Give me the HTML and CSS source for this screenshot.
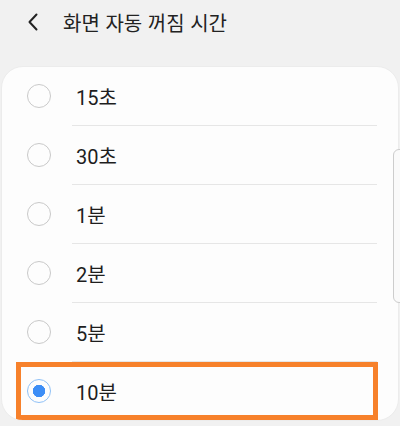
FILE: index.html
```html
<!DOCTYPE html>
<html lang="ko">
<head>
  <meta charset="UTF-8" />
  <meta name="viewport" content="width=device-width, initial-scale=1.0"/>
  <title>화면 자동 꺼짐 시간</title>
  <link rel="stylesheet" href="styles.css">
</head>
<body>
  <div class="screen">
    <header class="topbar">
      <button class="back" aria-label="뒤로">
        <svg width="12" height="18" viewBox="0 0 12 18">
          <path d="M9.5 1.5 L2.5 9 L9.5 16.5" fill="none" stroke="#222" stroke-width="2" stroke-linecap="round" stroke-linejoin="round"/>
        </svg>
      </button>
      <h1 class="title">화면 자동 꺼짐 시간</h1>
    </header>

    <!-- timeout options -->
    <ul class="options">
      <li class="option"><span class="radio"></span><span class="label">15초</span></li>
      <li class="option"><span class="radio"></span><span class="label">30초</span></li>
      <li class="option"><span class="radio"></span><span class="label">1분</span></li>
      <li class="option"><span class="radio"></span><span class="label">2분</span></li>
      <li class="option"><span class="radio"></span><span class="label">5분</span></li>
      <li class="option selected"><span class="radio"></span><span class="label">10분</span></li>
    </ul>

    <div class="edge-handle"></div>
  </div>
</body>
</html>
```

FILE: styles.css
```css
body {
  margin: 0;
  background: #f1f1f1;
  font-family: 'Roboto', 'Noto Sans CJK KR', sans-serif;
  color: #1e1e1e;
}

.screen {
  position: relative;
  width: 400px;
  height: 426px;
  overflow: hidden;
}

.topbar {
  display: flex;
  align-items: center;
  height: 44px;
  padding-left: 27px;
}

.back {
  display: flex;
  align-items: center;
  padding: 0;
  border: none;
  background: none;
  width: 36px;
  height: 20px;
}

.title {
  margin: 0;
  font-family: 'Noto Sans CJK KR', sans-serif;
  font-size: 20px;
  font-weight: 400;
  letter-spacing: 0;
  color: #222;
}

.options {
  list-style: none;
  margin: 22px 1px 0;
  padding: 0;
  background: #fdfdfd;
  border: 1px solid #ececec;
  border-radius: 22px;
  overflow: hidden;
}

.option {
  position: relative;
  display: flex;
  align-items: center;
  height: 58px;
  padding-left: 25px;
}

.option + .option::before {
  content: "";
  position: absolute;
  top: -1px;
  left: 70px;
  right: 21px;
  height: 1px;
  background: #e6e6e6;
}

.option + .option {
  margin-top: 1px;
}

.radio {
  box-sizing: border-box;
  width: 24px;
  height: 24px;
  border: 1.5px solid #c9c9c9;
  border-radius: 50%;
  margin-right: 25px;
}

.label {
  font-size: 20px;
}

.selected .radio {
  border-color: #8fc0f6;
  background: radial-gradient(circle, #3d8ef6 0 6px, transparent 6.5px);
}

/* highlight box around the chosen value */
.selected::after {
  content: "";
  position: absolute;
  top: 0;
  bottom: 0;
  left: 14px;
  right: 20px;
  border: 5px solid #f7812b;
}

.edge-handle {
  position: absolute;
  top: 149px;
  right: -2px;
  width: 7px;
  height: 152px;
  border: 1px solid #cdcdcd;
  border-radius: 6px 0 0 6px;
  background: #fafafa;
}
```
